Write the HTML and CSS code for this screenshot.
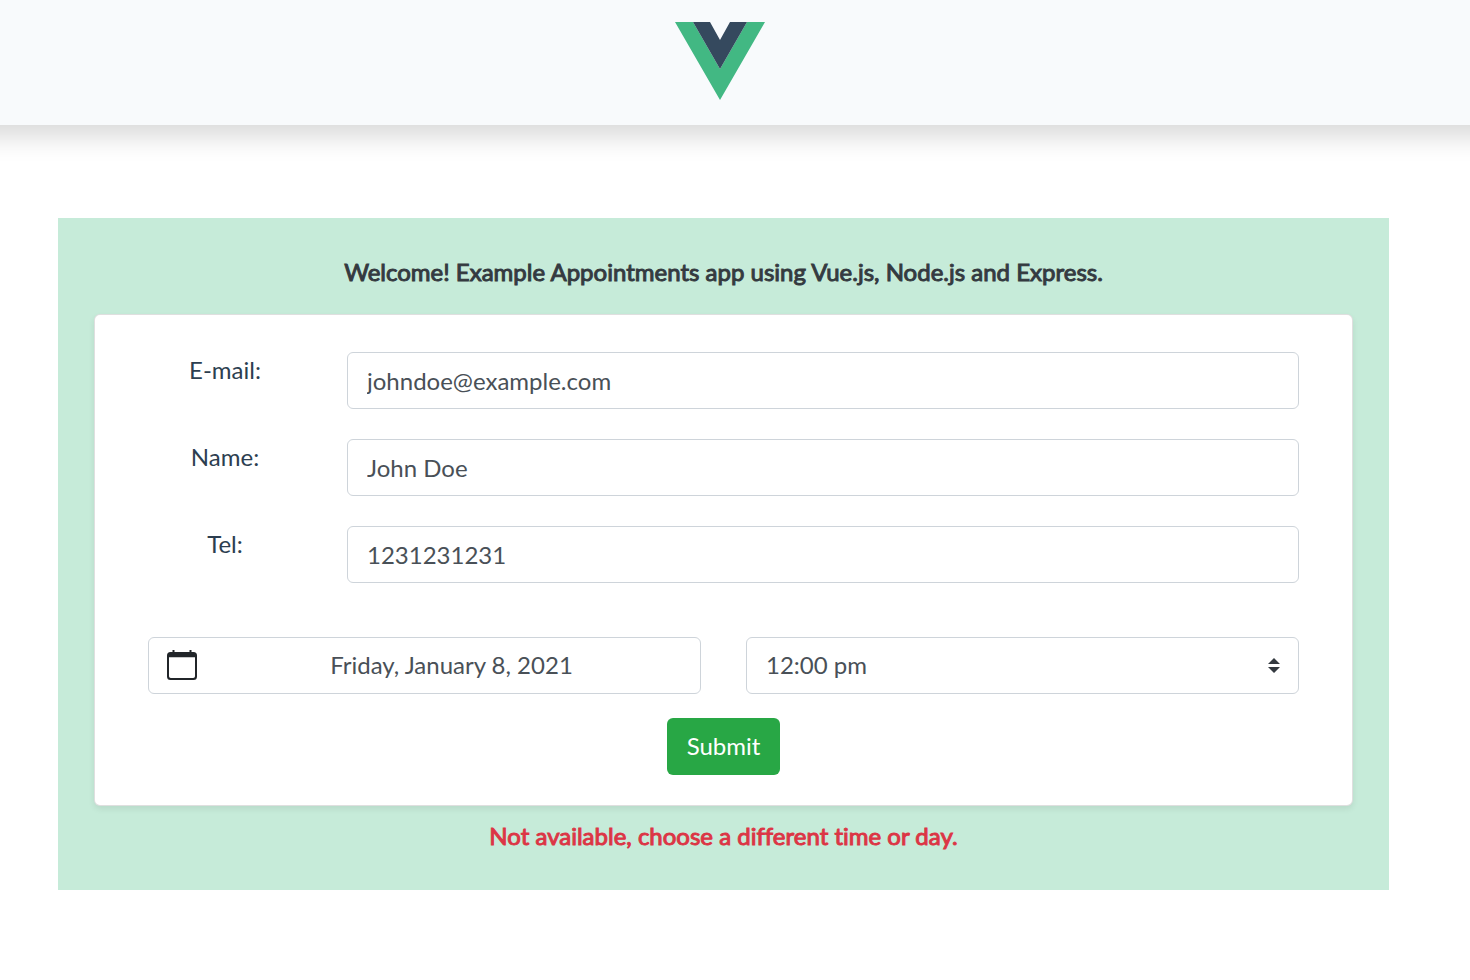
FILE: index.html
```html
<!DOCTYPE html>
<html lang="en">
<head>
<meta charset="utf-8">
<meta name="viewport" content="width=device-width, initial-scale=1">
<title>Appointments</title>
<link rel="stylesheet" href="styles.css">
</head>
<body>
<header class="site-header">
  <svg class="logo" viewBox="0 0 90 78" role="img" aria-label="Vue">
    <path fill="#42b883" d="M0 0h18l27 47L72 0h18L45 78z"/>
    <path fill="#35495e" d="M18 0h17l10 18L55 0h17L45 47z"/>
  </svg>
</header>
<main class="panel">
  <h1 class="message">Welcome! Example Appointments app using Vue.js, Node.js and Express.</h1>
  <form class="card">
    <div class="field">
      <label for="email">E-mail:</label>
      <input class="control" id="email" type="email" value="johndoe@example.com">
    </div>
    <div class="field">
      <label for="name">Name:</label>
      <input class="control" id="name" type="text" value="John Doe">
    </div>
    <div class="field">
      <label for="tel">Tel:</label>
      <input class="control" id="tel" type="tel" value="1231231231">
    </div>
    <div class="schedule">
      <button class="control date" type="button">
        <svg class="calendar" viewBox="0 0 30 30" aria-hidden="true">
          <path fill="#212529" fill-rule="evenodd" d="M5.500 0h2v2h15V0h2v2h2A3.500 3.500 0 0 1 30 5.500v21a3.500 3.500 0 0 1-3.500 3.500h-23A3.500 3.500 0 0 1 0 26.500v-21A3.500 3.500 0 0 1 3.500 2h2zM2 7.300v18.900A1.800 1.800 0 0 0 3.800 28h22.400a1.800 1.800 0 0 0 1.800-1.800V7.300z"/>
        </svg>
        <span class="date-text">Friday, January 8, 2021</span>
      </button>
      <div class="select-wrap">
        <select class="control time" aria-label="Time">
          <option>12:00 pm</option>
        </select>
        <svg class="arrows" viewBox="0 0 12 15" aria-hidden="true"><path fill="#343a40" d="M0 6l6-6 6 6zM0 9h12l-6 6z"/></svg>
      </div>
    </div>
    <button class="submit" type="submit">Submit</button>
  </form>
  <p class="message error" role="alert">Not available, choose a different time or day.</p>
</main>
</body>
</html>
```
FILE: styles.css
```css
* { box-sizing: border-box; }

body {
  margin: 0;
  overflow-x: clip;
  background: #fff;
  color: #2c3e50;
  font: 24px/36px Lato, "Liberation Sans", sans-serif;
  font-variant-ligatures: none;
  text-align: center;
}

/* Wider than the window so that the shadow runs evenly to both edges. */
.site-header {
  display: flex;
  justify-content: center;
  margin: 0 -30px;
  padding: 22px 30px 25px 0;
  background: #f8fafc;
  box-shadow: 0 12px 24px rgba(0, 0, 0, .15);
}

.logo { width: 90px; height: 78px; }

.panel {
  margin: 93px 81px 90px 58px;
  padding: 36px;
  background: #c6ebd9;
}

.message {
  margin: 0;
  color: #343a40;
  font-size: 24px;
  font-weight: 400;
  -webkit-text-stroke: 1px currentColor;
}

.error { color: #dc3545; }

.card {
  margin: 24px 0 12px;
  padding: 37px 53px 30px;
  border: 1px solid rgba(0, 0, 0, .125);
  border-radius: 6px;
  background: #fff;
  box-shadow: 0 3px 6px rgba(0, 0, 0, .075);
}

.field {
  display: grid;
  grid-template-columns: 77fr 476fr;
  gap: 45px;
  margin-bottom: 30px;
}

.control {
  width: 100%;
  min-width: 0;
  height: 57px;
  padding: 9px 19px;
  border: 1px solid #ced4da;
  border-radius: 6px;
  background: #fff;
  color: #495057;
  font: inherit;
}

.schedule {
  display: grid;
  grid-template-columns: 1fr 1fr;
  gap: 45px;
  margin: 54px 0 24px;
}

.date {
  display: flex;
  align-items: center;
  padding: 0 0 2px;
}

.calendar {
  flex: none;
  width: 30px;
  height: 30px;
  margin: 0 6px 0 18px;
}

.date-text { flex: 1; }

.select-wrap { position: relative; }

.time {
  padding: 8px 19px 10px;
  appearance: none;
}

.arrows {
  position: absolute;
  top: 21px;
  right: 19px;
  width: 12px;
  height: 15px;
  pointer-events: none;
}

.submit {
  height: 57px;
  padding: 8px 20px 10px;
  border: 0;
  border-radius: 6px;
  background: #28a745;
  color: #fff;
  font: inherit;
}
```
